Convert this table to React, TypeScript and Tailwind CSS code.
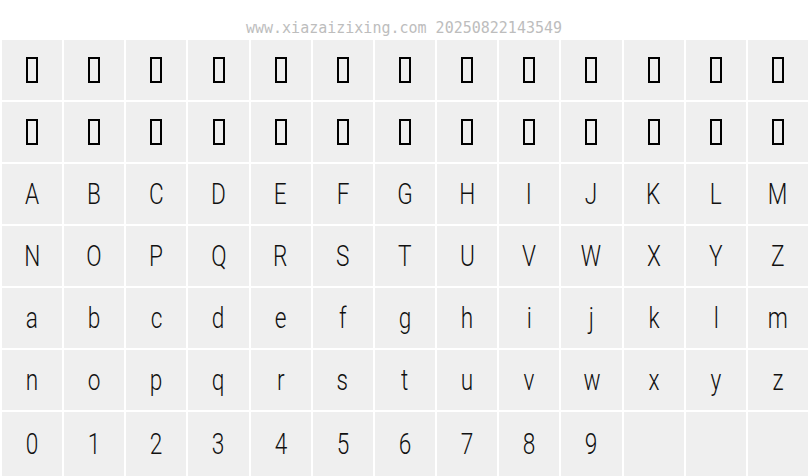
const rows: string[][] = [
  Array(13).fill(''),
  Array(13).fill(''),
  'ABCDEFGHIJKLM'.split(''),
  'NOPQRSTUVWXYZ'.split(''),
  'abcdefghijklm'.split(''),
  'nopqrstuvwxyz'.split(''),
  [...'0123456789'.split(''), '', '', ''],
];

function Tofu() {
  return <span className="block w-[12px] h-[26px] border-2 border-black" />;
}

export default function App() {
  return (
    <div className="w-[808px] h-[476px] bg-white overflow-hidden">
      <div className="h-10 pt-[19px] text-center text-[15px] leading-[18px] text-[#bdbdbd] font-['DejaVu_Sans_Mono',monospace]">
        www.xiazaizixing.com 20250822143549
      </div>
      <div className="grid grid-cols-[repeat(13,minmax(0,1fr))] grid-rows-[repeat(6,60px)_1fr] gap-[2px] pl-[2px] h-[436px]">
        {rows.map((row, r) =>
          row.map((ch, c) => (
            <div
              key={r + '-' + c}
              className="bg-[#efefef] flex items-center justify-center text-[29px] leading-none font-light text-[#111] font-['Roboto',sans-serif]"
            >
              {r < 2 ? <Tofu /> : <span className="inline-block scale-x-[0.78]">{ch}</span>}
            </div>
          ))
        )}
      </div>
    </div>
  );
}
